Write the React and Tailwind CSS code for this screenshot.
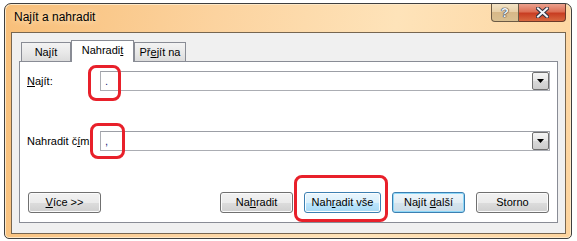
const font = "font-['Liberation_Sans',Arial,sans-serif]";

const buttonStyles = {
  normal:
    "border-[#707070] bg-[linear-gradient(to_bottom,#f2f2f2,#ebebeb_50%,#dddddd_50%,#cfcfcf)] shadow-[inset_0_0_0_1px_#fbfbfb]",
  hover:
    "border-[#3c7fb1] bg-[linear-gradient(to_bottom,#eaf6fd,#d9f0fc_50%,#bee6fd_50%,#a7d9f5)] shadow-[inset_0_0_0_1px_#fbfdfe]",
  default:
    "border-[#3c7fb1] bg-[linear-gradient(to_bottom,#eef6fb,#e2edf4_50%,#d5e4ee_50%,#cbdce8)] shadow-[inset_0_0_0_1px_#8ed8f8]",
};

const Btn = ({ children, variant = "normal", className = "" }) => (
  <div
    className={`flex h-[21px] w-[73px] items-center justify-center rounded-[3px] border text-[11px] text-black ${buttonStyles[variant]} ${className}`}
  >
    <span>{children}</span>
  </div>
);

const Combo = ({ value }) => (
  <div className="flex h-[20px] flex-1 items-center border border-[#abadb3] border-t-[#9c9fa6] bg-white">
    <span className="pl-[4px] text-[11px] leading-none text-[#1a1a7a]">{value}</span>
    <div className="ml-auto flex h-[18px] w-[17px] items-center justify-center rounded-[2px] border border-[#707070] bg-[linear-gradient(to_bottom,#f4f4f4,#e6e6e6_50%,#d9d9d9_50%,#cdcdcd)]">
      <svg width="7" height="4" viewBox="0 0 7 4">
        <path d="M0 0h7L3.5 4z" fill="#000" />
      </svg>
    </div>
  </div>
);

const Tab = ({ children, selected, className = "" }) =>
  selected ? (
    <div
      className={`relative z-10 -mb-px flex h-[22px] items-center justify-center border border-b-0 border-[#898c95] bg-white pb-[2px] text-[11px] text-black ${className}`}
    >
      <span>{children}</span>
    </div>
  ) : (
    <div
      className={`flex h-[19px] items-center justify-center border border-b-0 border-[#898c95] bg-[linear-gradient(to_bottom,#f3f3f3,#e9e9e9_50%,#dcdcdc)] text-[11px] text-black ${className}`}
    >
      <span>{children}</span>
    </div>
  );

const RedMark = ({ className }) => (
  <div className={`absolute rounded-[8px] border-[3px] border-[#e8202a] ${className}`} />
);

export default function App() {
  return (
    <div className={`relative h-[241px] w-[577px] overflow-hidden bg-white ${font}`}>
      <div className="ml-[4px] mt-[3px] flex h-[236px] w-[568px] flex-col rounded-t-[7px] rounded-b-[5px] border border-[#3f3f3f] bg-[linear-gradient(100deg,#f8bf79,#fcd39f_35%,#fee3b9_65%,#fdd49e)] pb-[4px] pl-[6px] pr-[5px] shadow-[inset_0_0_0_1px_#fde9c9]">
        {/* title bar */}
        <div className="flex h-[28px] shrink-0 items-start justify-between">
          <span className="ml-[3px] mt-[6px] text-[12px] leading-[15px] text-black [text-shadow:0_0_6px_#fff4e0]">
            Najít a nahradit
          </span>
          <div className="flex">
            <div className="flex h-[18px] w-[28px] items-center justify-center rounded-bl-[4px] border border-t-0 border-[#6b5a45] bg-[linear-gradient(to_bottom,#f3e3c6,#e6cfa6_50%,#d7b888_50%,#d9c092)]">
              <span className="text-[13px] font-bold leading-none text-[#f3f4f8] [text-shadow:0_0_1px_#2e3342,0_0_1px_#2e3342,0_0_1px_#2e3342]">
                ?
              </span>
            </div>
            <div className="flex h-[18px] w-[47px] items-center justify-center rounded-br-[4px] border border-l-0 border-t-0 border-[#6b3a2a] bg-[linear-gradient(to_bottom,#eba18e,#dd6f55_45%,#c83d22_55%,#d8673f)]">
              <svg width="13" height="11" viewBox="0 0 13 11">
                <path d="M2 1.5l9 8M11 1.5l-9 8" stroke="#2f3240" strokeWidth="4" strokeLinecap="square" />
                <path d="M2 1.5l9 8M11 1.5l-9 8" stroke="#f4f5f8" strokeWidth="2" strokeLinecap="square" />
              </svg>
            </div>
          </div>
        </div>

        {/* client area */}
        <div className="flex flex-1 flex-col border border-[#776650] bg-[#f0f0f0] px-[7px] pb-[10px] pt-[7px]">
          <div className="flex h-[21px] shrink-0 items-end">
            <Tab className="ml-[2px] w-[50px] pt-[1px]">
              Na<u>j</u>ít
            </Tab>
            <Tab selected className="w-[63px]">
              Nahradi<u>t</u>
            </Tab>
            <Tab className="w-[52px] pt-[1px]">
              Př<u>e</u>jít na
            </Tab>
          </div>

          <div className="flex flex-1 flex-col border border-[#898c95] bg-white pb-[9px] pl-[7px] pr-[7px] pt-[9px]">
            <div className="flex items-center">
              <span className="w-[73px] text-[11px] text-black">
                <u>N</u>ajít:
              </span>
              <Combo value="." />
            </div>
            <div className="mt-[40px] flex items-center">
              <span className="w-[73px] text-[11px] text-black">
                Nahradit č<u>í</u>m:
              </span>
              <Combo value="," />
            </div>

            <div className="mt-auto flex items-center">
              <Btn className="ml-px">
                <u>V</u>íce &gt;&gt;
              </Btn>
              <div className="flex-1" />
              <Btn>
                Na<u>h</u>radit
              </Btn>
              <Btn variant="hover" className="ml-[11px] w-[77px]">
                Nah<u>r</u>adit vše
              </Btn>
              <Btn variant="default" className="ml-[11px]">
                Najít <u>d</u>alší
              </Btn>
              <Btn className="ml-[11px] mr-px">Storno</Btn>
            </div>
          </div>
        </div>
      </div>

      <RedMark className="left-[88px] top-[65px] h-[36px] w-[33px]" />
      <RedMark className="left-[90px] top-[123px] h-[36px] w-[35px]" />
      <RedMark className="left-[294px] top-[175px] h-[47px] w-[94px]" />
    </div>
  );
}
